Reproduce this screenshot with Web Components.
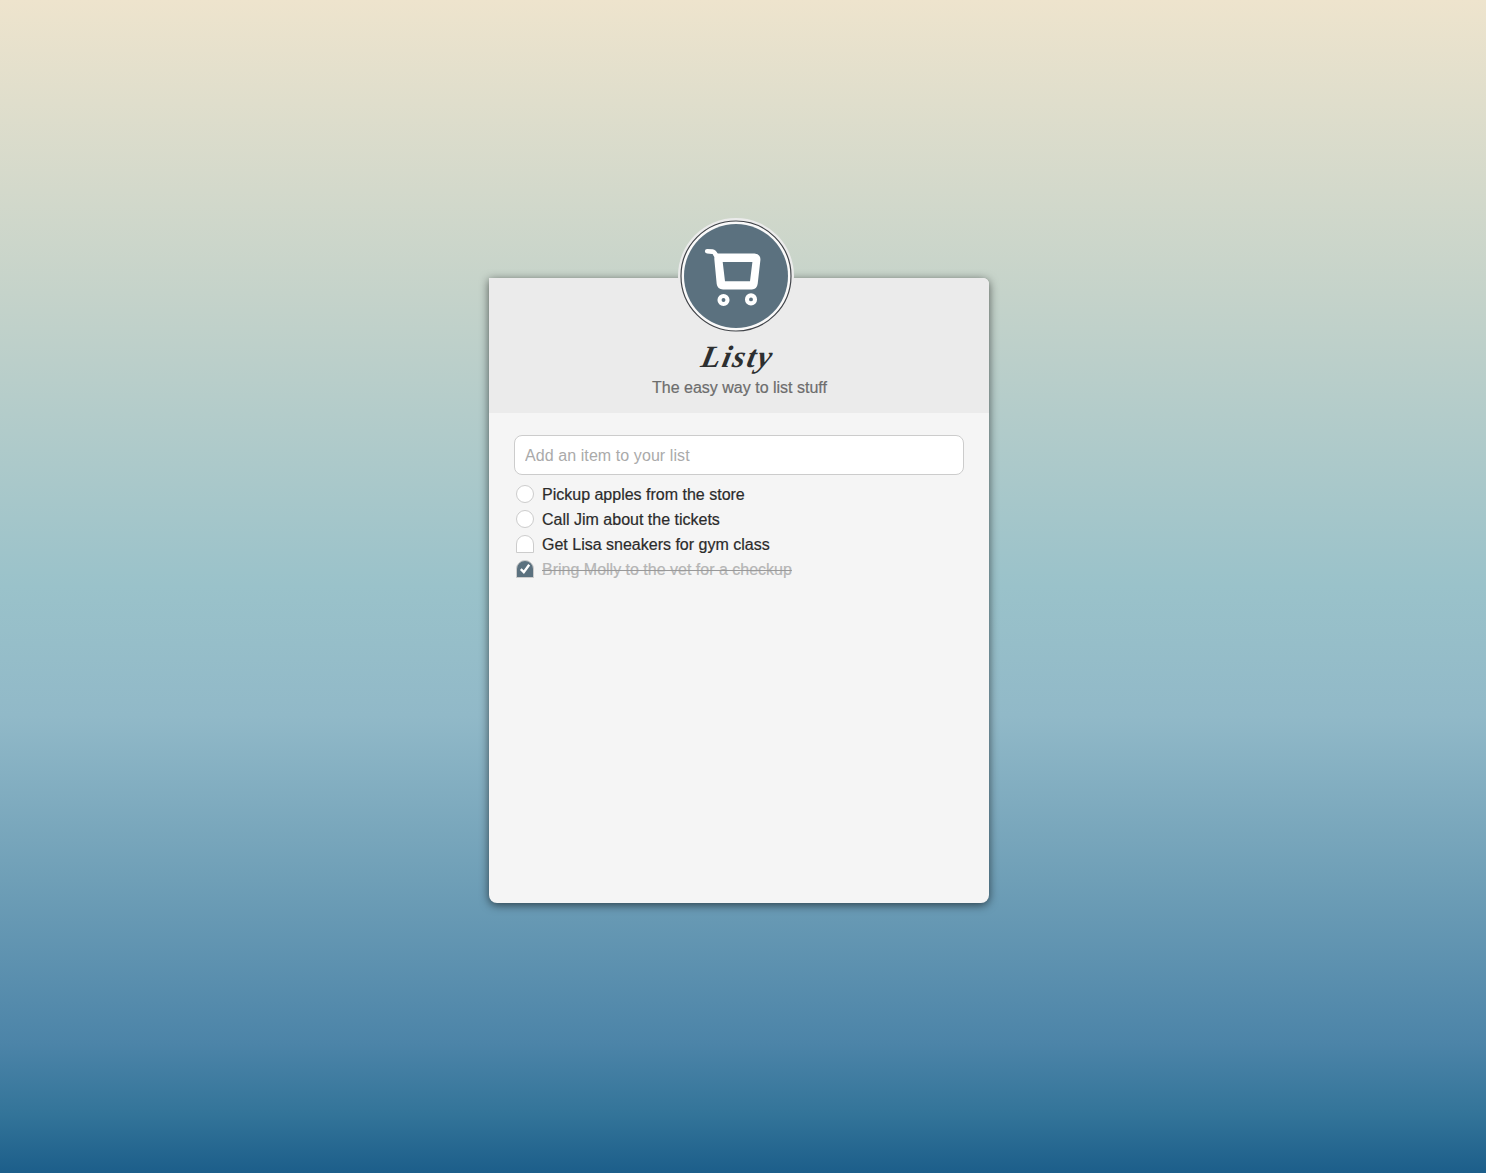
<!DOCTYPE html>
<html lang="en"><head><meta charset="utf-8"><title>Listy</title>
<style>
html,body{margin:0;height:100%}
body{font:16px/25px "Liberation Sans",Arial,sans-serif;color:#2b2b2b}
</style></head><body>
<listy-app>
<listy-header slot="header"><listy-logo slot="logo"></listy-logo><span slot="title">Listy</span><span slot="tagline">The easy way to list stuff</span></listy-header>
<listy-input placeholder="Add an item to your list"></listy-input>
<listy-item>Pickup apples from the store</listy-item>
<listy-item>Call Jim about the tickets</listy-item>
<listy-item tab>Get Lisa sneakers for gym class</listy-item>
<listy-item tab done>Bring Molly to the vet for a checkup</listy-item>
</listy-app>
<script>
const define=(name,html)=>customElements.define(name,class extends HTMLElement{
  constructor(){super();this.attachShadow({mode:'open'}).innerHTML=html}
});
define('listy-logo',`<style>:host{display:block;width:116px;height:116px}svg{display:block}</style>
<svg width="116" height="116" viewBox="0 0 116 116" fill="none">
<circle cx="58" cy="58" r="58" fill="#ebebeb"/>
<circle cx="58" cy="58" r="55" fill="#fafafa" stroke="#414449" stroke-width="1.2"/>
<circle cx="58" cy="58" r="52" fill="#5b717f"/>
<path d="M29.2 33.2L34.2 33.6Q36.5 34 37.8 37L40.5 40" stroke="#fff" stroke-width="4.6" stroke-linecap="round" stroke-linejoin="round"/>
<path fill="#fff" fill-rule="evenodd" d="M36.5 36L39.5 35.6H76.5Q82.8 36.2 82.4 42L79.7 65.8Q79 71.2 73.8 71.5H45Q39.4 71.2 38.7 66L36.3 41ZM44.7 44L47 63.2H72L74.4 44Z"/>
<circle cx="45.5" cy="82" r="4" stroke="#fff" stroke-width="4.1"/><circle cx="73" cy="81.4" r="4" stroke="#fff" stroke-width="4.1"/>
</svg>`);
define('listy-header',`<style>
:host{display:flex;flex-direction:column;align-items:center;height:135px;background:#ebebeb;border-radius:0 6px 0 0;position:relative}
.logo{position:absolute;left:189px;top:-60px}
.t{margin:60px 0 0 -2px;font:italic bold 31px/38px "Liberation Serif",serif;letter-spacing:2px;color:#2d2f30;height:37px;transform:skewX(-12deg)}
.s{line-height:25px;color:#6d6d6d;white-space:nowrap;padding-left:1px;-webkit-text-stroke:.2px currentColor}
</style><div class="logo"><slot name="logo"></slot></div><div class="t"><slot name="title"></slot></div><div class="s"><slot name="tagline"></slot></div>`);
define('listy-app',`<style>
:host{display:flex;justify-content:center;align-items:flex-start;box-sizing:border-box;height:1173px;padding:278px 8px 0 0;background:linear-gradient(#eee4cd 0,#c5d3ca 25%,#9ac2ca 50%,#91b9c8 61%,#6f9fb7 75%,#4c84a8 89%,#337499 95%,#1c5e8a 100%)}
main{width:500px;height:625px;background:#f5f5f5;border-radius:0 6px 8px 8px;box-shadow:0 2px 10px rgba(0,0,0,.6)}
.body{display:flex;flex-direction:column;padding:22px 25px}
</style><main><slot name="header"></slot><div class="body"><slot></slot></div></main>`);
class ListyInput extends HTMLElement{constructor(){super();this.attachShadow({mode:'open'}).innerHTML=`<style>
:host{display:block;margin-bottom:7px}
input{display:block;box-sizing:border-box;width:450px;height:40px;border:1px solid #ccc;border-radius:8px;padding:1px 10px 0;background:#fff;font:inherit;letter-spacing:.08px;outline:0}
input::placeholder{color:#aaa;opacity:1}
</style><input type="text">`;this.shadowRoot.querySelector('input').placeholder=this.getAttribute('placeholder')}}
customElements.define('listy-input',ListyInput);
define('listy-item',`<style>
:host{display:flex;align-items:center;height:25px;padding-left:2px;gap:8px}
i{box-sizing:border-box;width:18px;height:18px;margin-bottom:1px;border:1px solid #ccc;border-radius:9px;background:#fff}
:host([tab]) i{border-radius:9px 9px 0 0}
:host([done]) i{background:#5b717f}
svg{display:none}:host([done]) svg{display:block}
span{white-space:nowrap;-webkit-text-stroke:.2px currentColor}
:host([done]) span{color:#b5b5b5;text-decoration:line-through #999 1px}
</style><i><svg width="16" height="16" viewBox="0 0 16 16" fill="none"><path d="M3.8 8.2L6.8 11.2L12.2 3.8" stroke="#fff" stroke-width="2.4"/></svg></i><span><slot></slot></span>`);
</script></body></html>
